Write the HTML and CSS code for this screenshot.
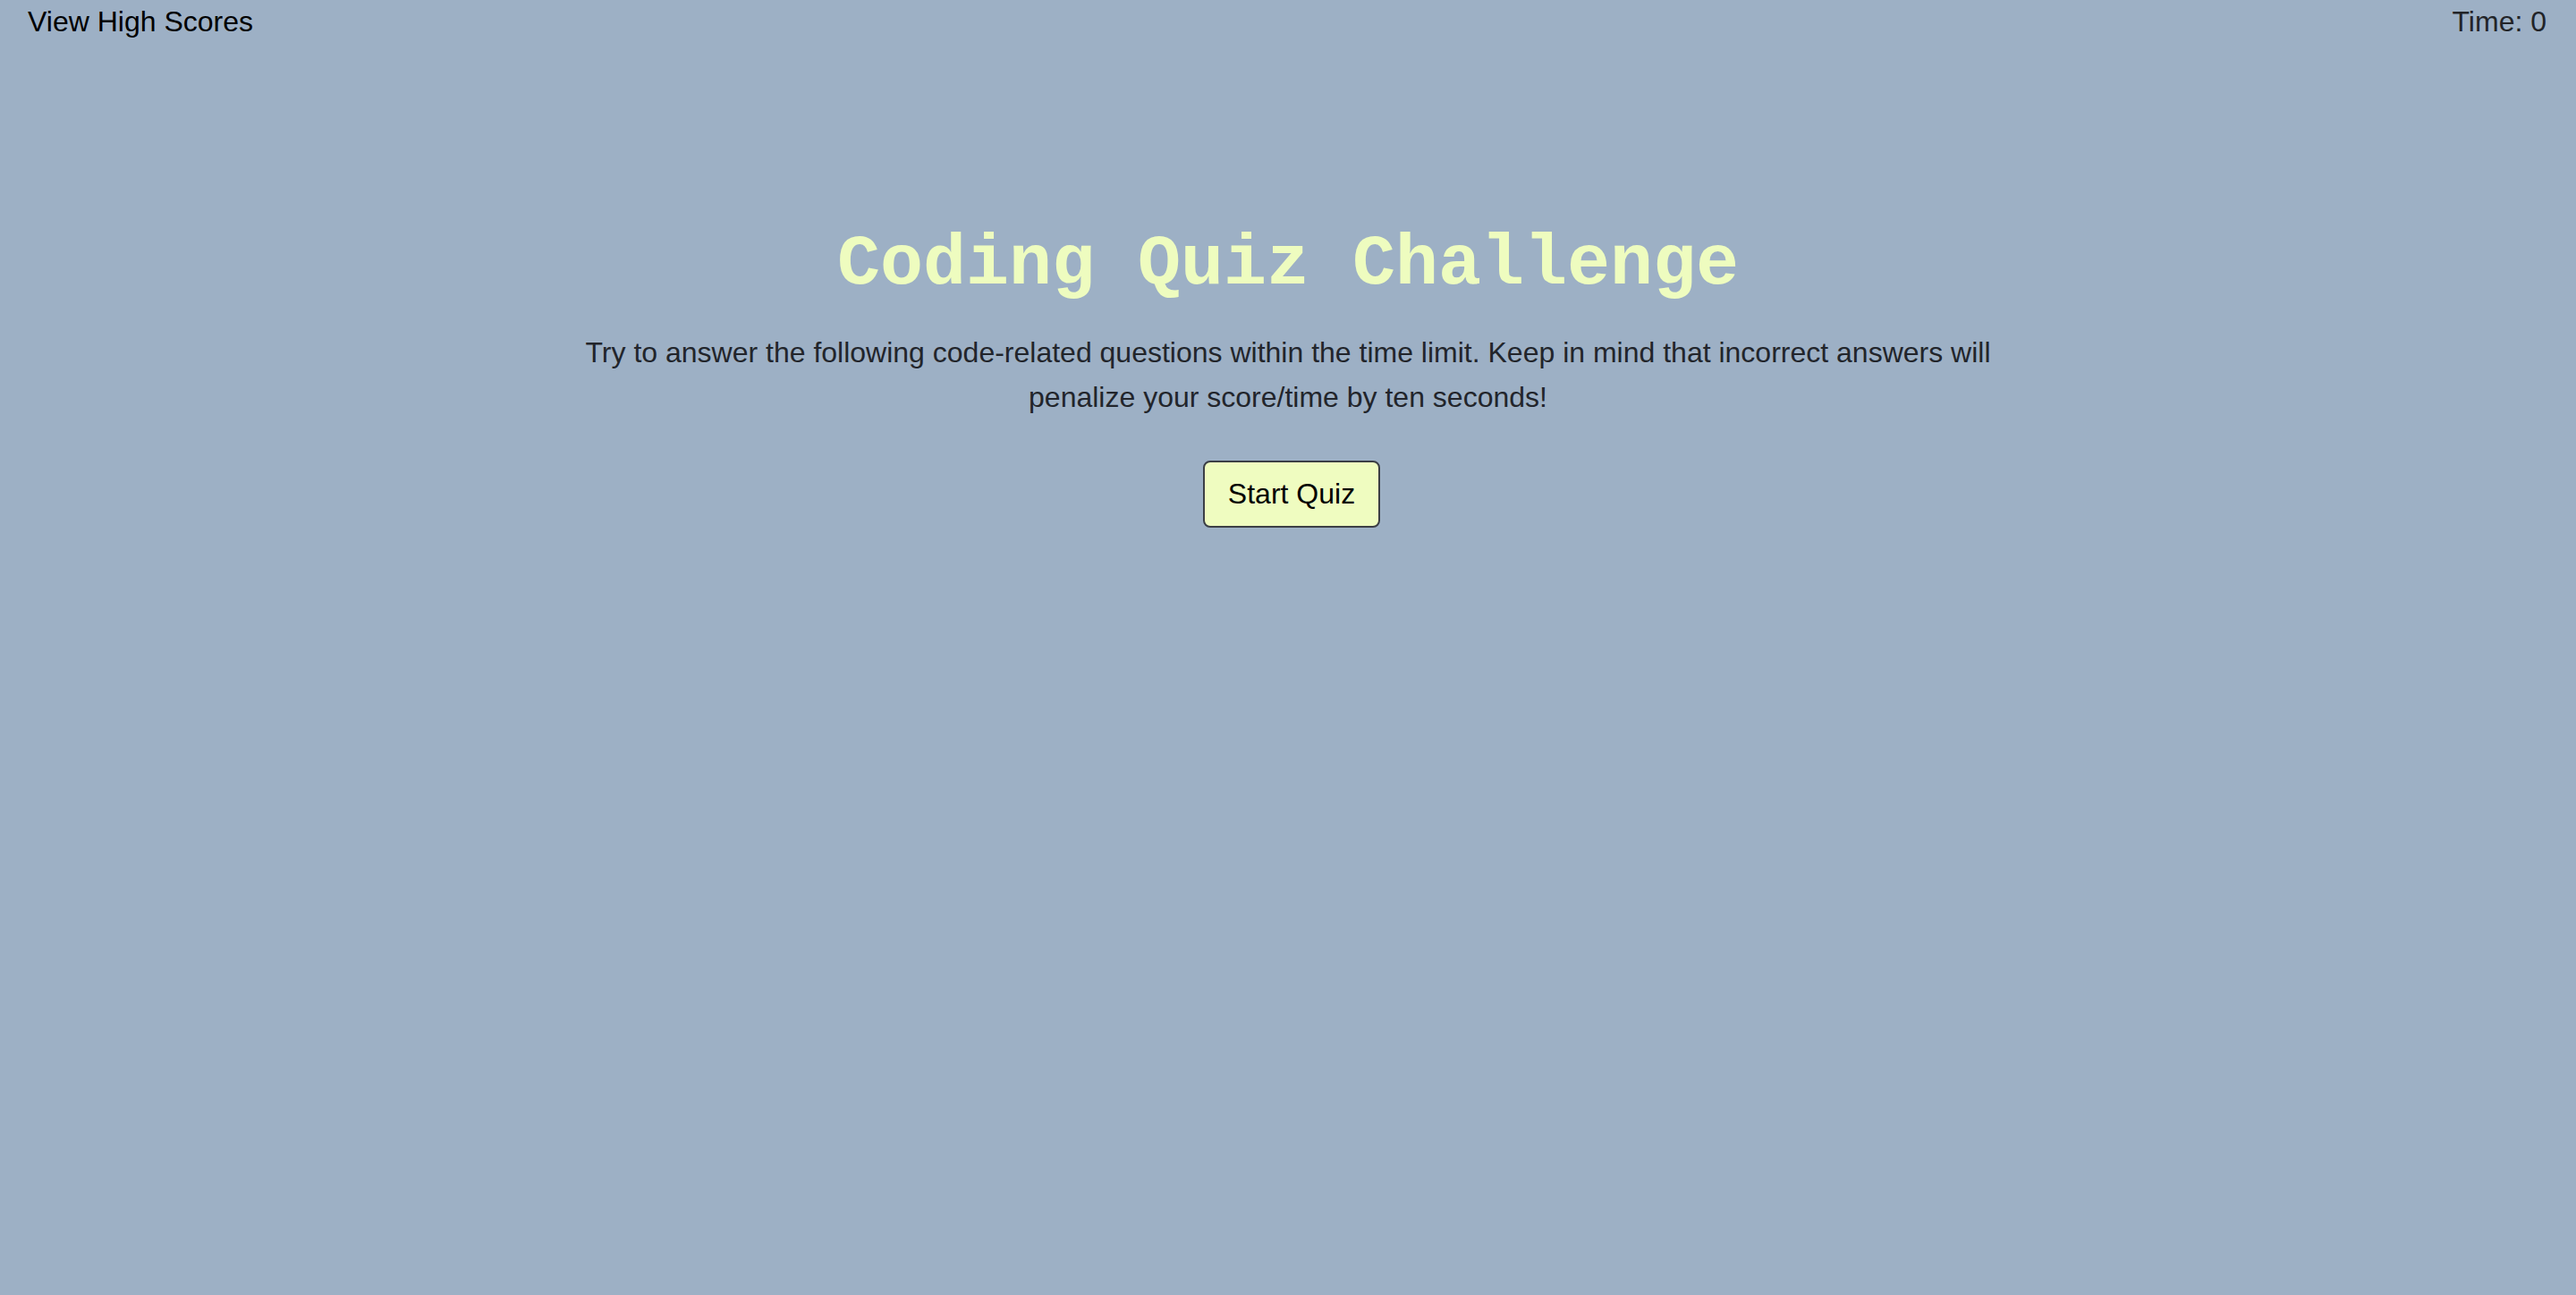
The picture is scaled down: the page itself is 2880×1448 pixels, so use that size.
FILE: index.html
```html
<!DOCTYPE html>
<html lang="en">
<head>
<meta charset="utf-8">
<title>Coding Quiz Challenge</title>
<link rel="stylesheet" href="styles.css">
</head>
<body>
<header class="topbar">
  <a class="scores-link" href="#">View High Scores</a>
  <div class="timer">Time: <span class="timer-value">0</span></div>
</header>
<main class="intro">
  <h1 class="intro-title">Coding Quiz Challenge</h1>
  <p class="intro-text">Try to answer the following code-related questions within the time limit. Keep in mind that incorrect answers will penalize your score/time by ten seconds!</p>
  <button class="start-btn" type="button">Start Quiz</button>
</main>
</body>
</html>
```
FILE: styles.css
```css
html, body {
  margin: 0;
  padding: 0;
  height: 100%;
}

body {
  background: #9db0c5;
  font-family: "Liberation Sans", Arial, Helvetica, sans-serif;
  color: #22252b;
}

.topbar {
  display: flex;
  justify-content: space-between;
  align-items: flex-start;
  padding: 6px 33px 0 31px;
  font-size: 32px;
}

.scores-link {
  color: #000;
  text-decoration: none;
}

.timer {
  color: #222428;
}

.intro {
  max-width: 1600px;
  margin: 0 auto;
  text-align: center;
}

.intro-title {
  margin: 205px 0 0;
  font-family: "Liberation Mono", "Courier New", monospace;
  font-weight: bold;
  font-size: 80px;
  line-height: 96px;
  color: #eefcbf;
}

.intro-text {
  margin: 25px 0 0;
  font-size: 32px;
  line-height: 50px;
  color: #22252b;
}

.start-btn {
  margin: 46px 0 0 8px;
  font-family: "Liberation Sans", Arial, Helvetica, sans-serif;
  font-size: 32px;
  line-height: 37px;
  padding: 17px 26px;
  border: 2px solid #3b3e45;
  border-radius: 8px;
  background: #effcc0;
  color: #000;
  cursor: pointer;
}
```
